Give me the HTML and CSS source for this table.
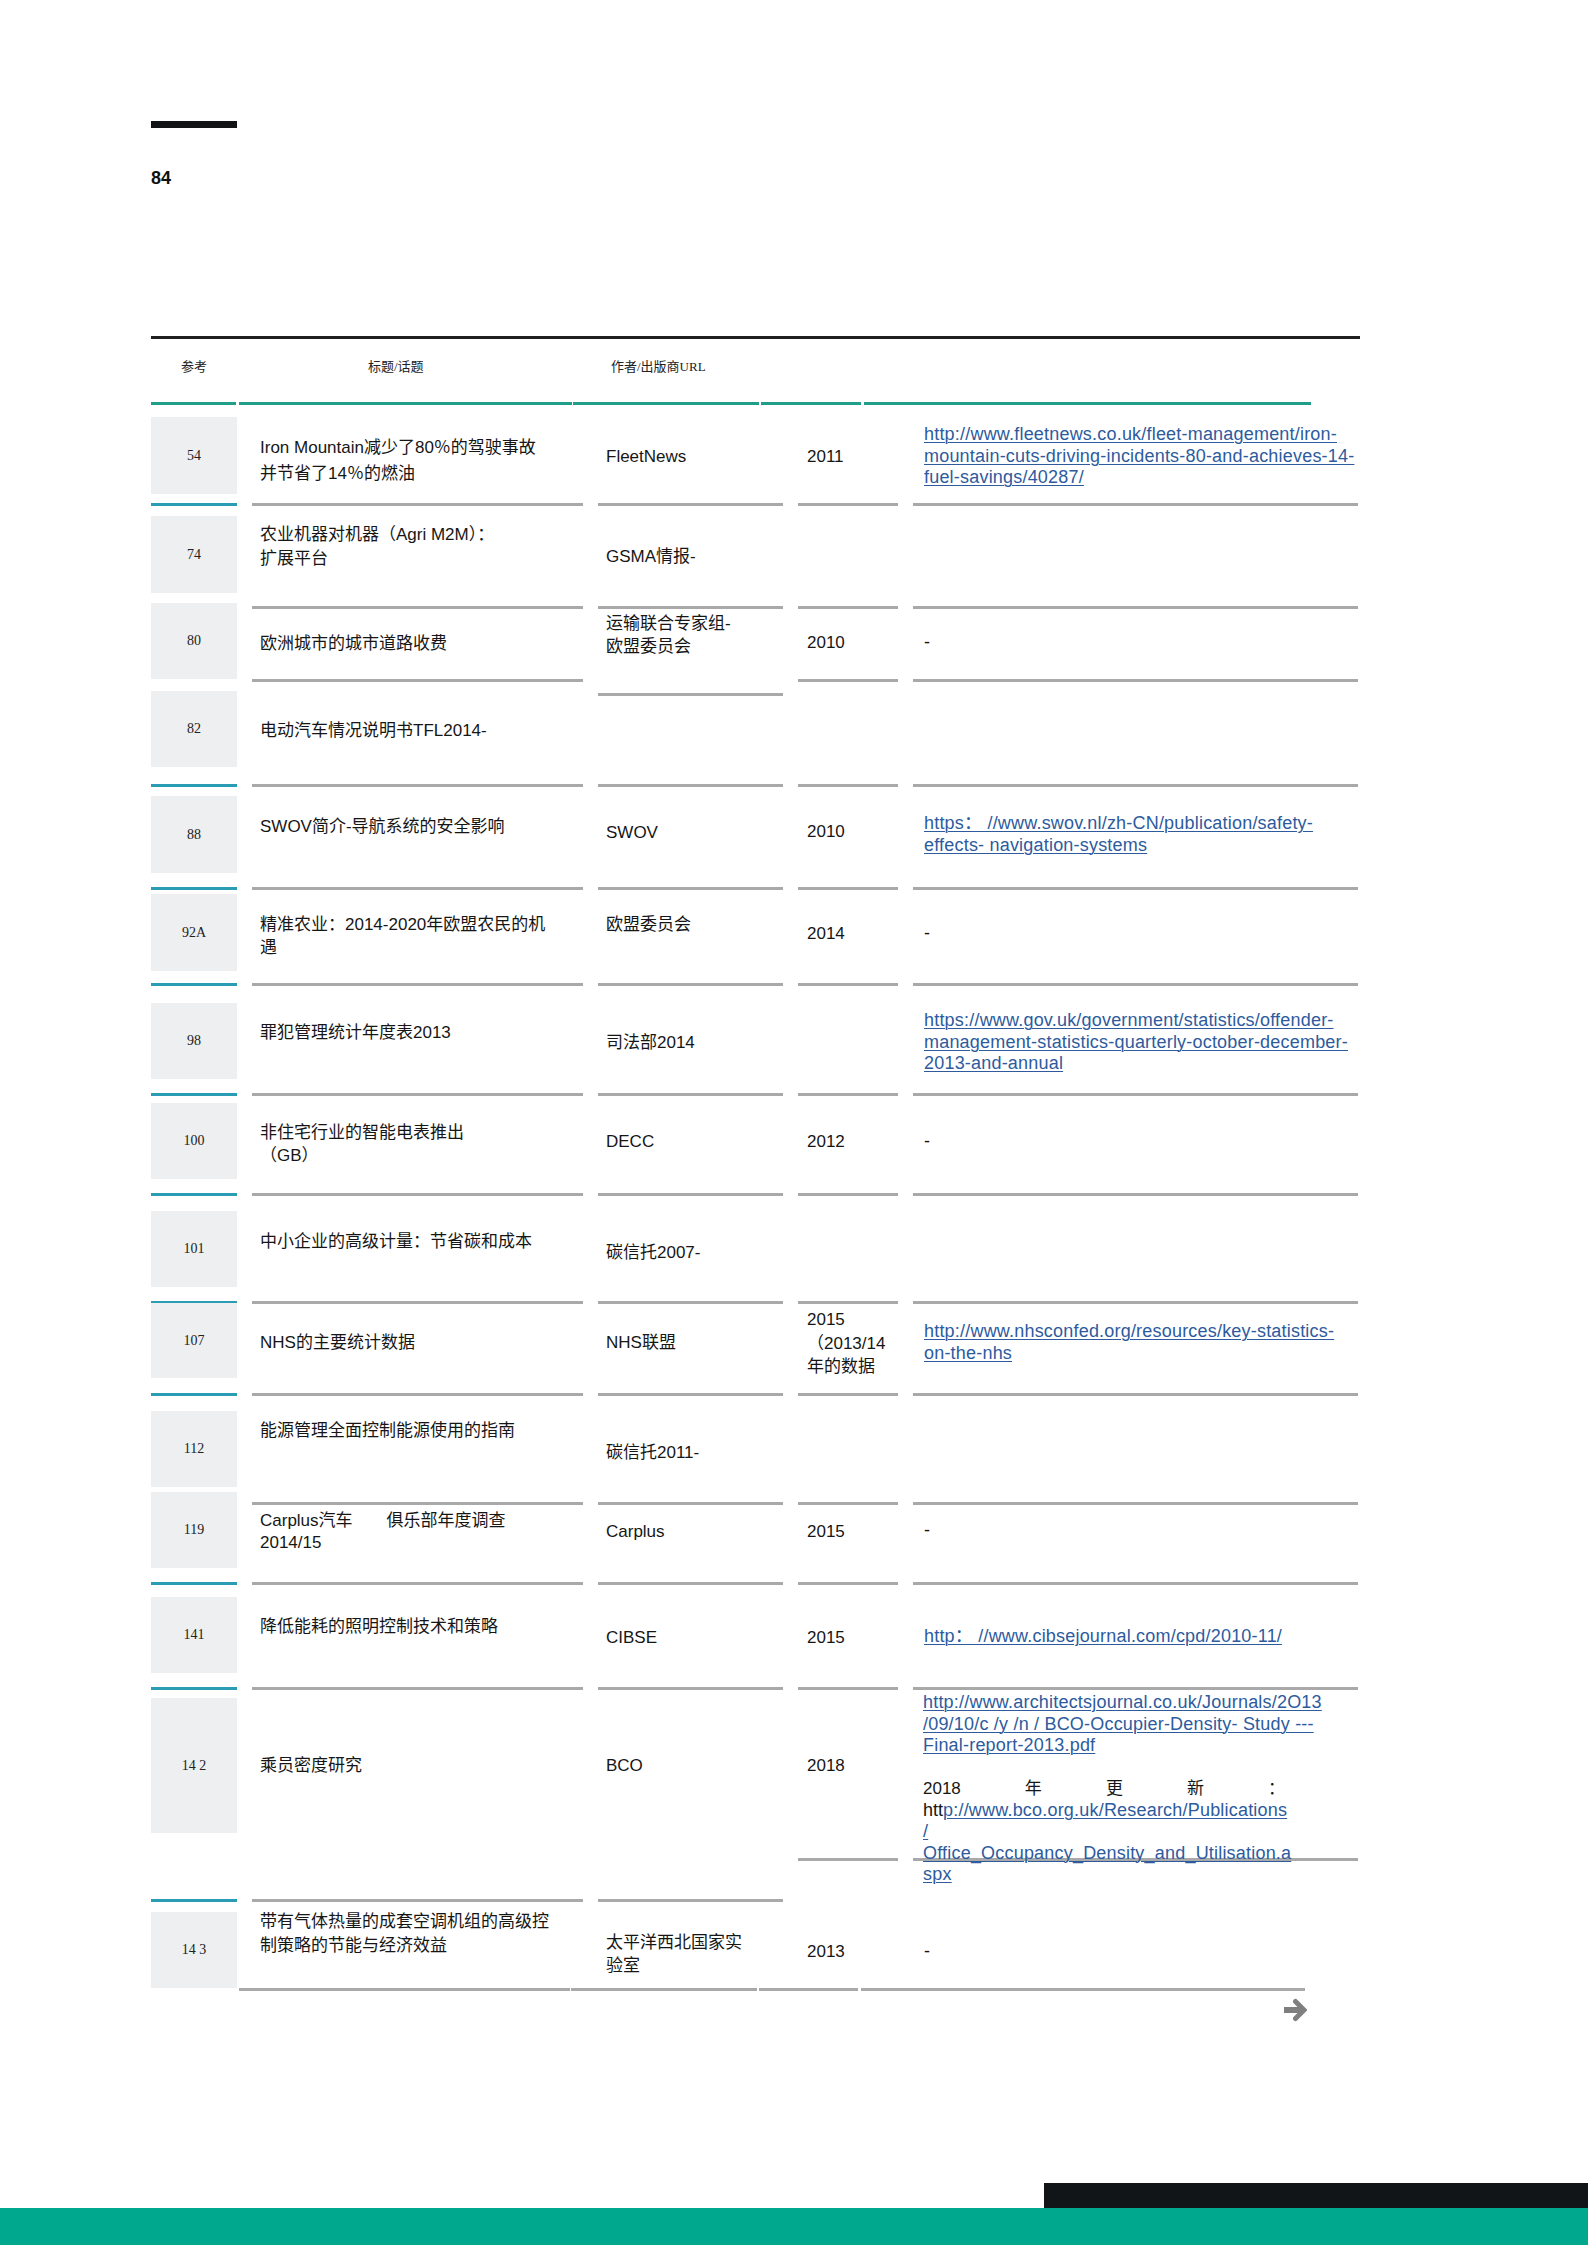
FILE: index.html
```html
<!DOCTYPE html>
<html lang="zh-CN">
<head>
<meta charset="utf-8">
<title>参考文献 84</title>
<link rel="stylesheet" href="styles.css">
</head>
<body>
<div class="page">
  <header class="page-head">
    <div class="tab-bar"></div>
    <div class="page-num">84</div>
  </header>

  <section class="refs">
    <div class="refs-head">
      <div class="h-ref">参考</div>
      <div class="h-title">标题/话题</div>
      <div class="h-author">作者/出版商URL</div>
    </div>
    <div class="head-rule">
      <span class="hr-a"></span><span class="hr-b"></span><span class="hr-c"></span><span class="hr-d"></span><span class="hr-e"></span>
    </div>

    <div class="row r54">
      <div class="c c-ref cyan"><div class="ref-box">54</div></div>
      <div class="c c-title">Iron Mountain减少了80％的驾驶事故<br>并节省了14％的燃油</div>
      <div class="c c-author">FleetNews</div>
      <div class="c c-year">2011</div>
      <div class="c c-url"><a class="link" href="#">http://www.fleetnews.co.uk/fleet-management/iron-<br>mountain-cuts-driving-incidents-80-and-achieves-14-<br>fuel-savings/40287/</a></div>
    </div>

    <div class="row r74">
      <div class="c c-ref"><div class="ref-box">74</div></div>
      <div class="c c-title">农业机器对机器（Agri M2M）：<br>扩展平台</div>
      <div class="c c-author">GSMA情报-</div>
      <div class="c c-year"></div>
      <div class="c c-url"></div>
    </div>

    <div class="row r80">
      <div class="c c-ref"><div class="ref-box">80</div></div>
      <div class="c c-title">欧洲城市的城市道路收费</div>
      <div class="c c-author">运输联合专家组-<br>欧盟委员会</div>
      <div class="c c-year">2010</div>
      <div class="c c-url">-</div>
    </div>

    <div class="row r82">
      <div class="c c-ref cyan"><div class="ref-box">82</div></div>
      <div class="c c-title">电动汽车情况说明书TFL2014-</div>
      <div class="c c-author"></div>
      <div class="c c-year"></div>
      <div class="c c-url"></div>
    </div>

    <div class="row r88">
      <div class="c c-ref cyan"><div class="ref-box">88</div></div>
      <div class="c c-title">SWOV简介-导航系统的安全影响</div>
      <div class="c c-author">SWOV</div>
      <div class="c c-year">2010</div>
      <div class="c c-url"><a class="link" href="#">https：&nbsp;//www.swov.nl/zh-CN/publication/safety-<br>effects- navigation-systems</a></div>
    </div>

    <div class="row r92">
      <div class="c c-ref cyan"><div class="ref-box">92A</div></div>
      <div class="c c-title">精准农业：2014-2020年欧盟农民的机<br>遇</div>
      <div class="c c-author">欧盟委员会</div>
      <div class="c c-year">2014</div>
      <div class="c c-url">-</div>
    </div>

    <div class="row r98">
      <div class="c c-ref cyan"><div class="ref-box">98</div></div>
      <div class="c c-title">罪犯管理统计年度表2013</div>
      <div class="c c-author">司法部2014</div>
      <div class="c c-year"></div>
      <div class="c c-url"><a class="link" href="#">https://www.gov.uk/government/statistics/offender-<br>management-statistics-quarterly-october-december-<br>2013-and-annual</a></div>
    </div>

    <div class="row r100">
      <div class="c c-ref cyan"><div class="ref-box">100</div></div>
      <div class="c c-title">非住宅行业的智能电表推出<br>（GB）</div>
      <div class="c c-author">DECC</div>
      <div class="c c-year">2012</div>
      <div class="c c-url">-</div>
    </div>

    <div class="row r101">
      <div class="c c-ref cyan"><div class="ref-box">101</div></div>
      <div class="c c-title">中小企业的高级计量：节省碳和成本</div>
      <div class="c c-author">碳信托2007-</div>
      <div class="c c-year"></div>
      <div class="c c-url"></div>
    </div>

    <div class="row r107">
      <div class="c c-ref cyan"><div class="ref-box">107</div></div>
      <div class="c c-title">NHS的主要统计数据</div>
      <div class="c c-author">NHS联盟</div>
      <div class="c c-year">2015<br>（2013/14<br>年的数据</div>
      <div class="c c-url"><a class="link" href="#">http://www.nhsconfed.org/resources/key-statistics-<br>on-the-nhs</a></div>
    </div>

    <div class="row r112">
      <div class="c c-ref"><div class="ref-box">112</div></div>
      <div class="c c-title">能源管理全面控制能源使用的指南</div>
      <div class="c c-author">碳信托2011-</div>
      <div class="c c-year"></div>
      <div class="c c-url"></div>
    </div>

    <div class="row r119">
      <div class="c c-ref cyan"><div class="ref-box">119</div></div>
      <div class="c c-title">Carplus汽车　　俱乐部年度调查<br>2014/15</div>
      <div class="c c-author">Carplus</div>
      <div class="c c-year">2015</div>
      <div class="c c-url">-</div>
    </div>

    <div class="row r141">
      <div class="c c-ref cyan"><div class="ref-box">141</div></div>
      <div class="c c-title">降低能耗的照明控制技术和策略</div>
      <div class="c c-author">CIBSE</div>
      <div class="c c-year">2015</div>
      <div class="c c-url"><a class="link" href="#">http：&nbsp;//www.cibsejournal.com/cpd/2010-11/</a></div>
    </div>

    <div class="row r142">
      <div class="c c-ref cyan"><div class="ref-box">14 2</div></div>
      <div class="c c-title">乘员密度研究</div>
      <div class="c c-author">BCO</div>
      <div class="c c-year">2018</div>
      <div class="c c-url">
        <a class="link" href="#">http://www.architectsjournal.co.uk/Journals/2O13<br>/09/10/c /y /n / BCO-Occupier-Density- Study ---<br>Final-report-2013.pdf</a>
        <div class="update"><span>2018</span><span>年</span><span>更</span><span>新</span><span>：</span></div>
        <div>htt<a class="link" href="#">p://www.bco.org.uk/Research/Publications<br>/<br>Office_Occupancy_Density_and_Utilisation.a<br>spx</a></div>
      </div>
    </div>

    <div class="row r143">
      <div class="c c-ref"><div class="ref-box">14 3</div></div>
      <div class="c c-title">带有气体热量的成套空调机组的高级控<br>制策略的节能与经济效益</div>
      <div class="c c-author">太平洋西北国家实<br>验室</div>
      <div class="c c-year">2013</div>
      <div class="c c-url">-</div>
    </div>

    <div class="end-rule">
      <span class="er-a"></span><span class="er-b"></span><span class="er-c"></span><span class="er-d"></span>
    </div>

    <div class="next">
      <svg width="24" height="24" viewBox="0 0 24 24" aria-hidden="true">
        <path d="M1 12 H18" stroke="#7f7f7f" stroke-width="6" fill="none"/>
        <path d="M12.5 3.5 L21 12 L12.5 20.5" stroke="#7f7f7f" stroke-width="5" fill="none" stroke-linecap="round" stroke-linejoin="miter"/>
      </svg>
    </div>
  </section>

  <footer class="foot">
    <div class="foot-black"></div>
    <div class="foot-teal"></div>
  </footer>
</div>
</body>
</html>
```

FILE: styles.css
```css
* { box-sizing: border-box; }

html, body {
  margin: 0;
  padding: 0;
  background: #ffffff;
}

body {
  font-family: "Liberation Sans", "Noto Sans CJK SC", sans-serif;
  color: #161616;
}

.page {
  width: 1588px;
  min-height: 2245px;
  display: flex;
  flex-direction: column;
}

/* ---------- page head ---------- */
.page-head {
  padding: 121px 0 0 151px;
}

.tab-bar {
  width: 86px;
  height: 7px;
  background: #111315;
}

.page-num {
  margin-top: 40px;
  font-size: 18px;
  font-weight: 700;
  line-height: 21px;
  color: #111;
}

/* ---------- table ---------- */
.refs {
  margin: 147px 0 0 151px;
  width: 1209px;
  border-top: 3px solid #202020;
}

.refs-head {
  height: 63px;
  display: flex;
  padding-top: 20px;
  font-family: "Liberation Serif", "Noto Sans CJK SC", serif;
  font-size: 13px;
  line-height: 16px;
  color: #222;
}

.h-ref { width: 86px; text-align: center; }
.h-title { margin-left: 131px; width: 243px; }

.head-rule,
.end-rule {
  display: flex;
  height: 3px;
}

.head-rule span { height: 3px; background: #1f9e89; display: block; }
.hr-a { width: 85px; }
.hr-b { width: 333px; margin-left: 3px; }
.hr-c { width: 186px; margin-left: 1px; }
.hr-d { width: 100px; margin-left: 2px; }
.hr-e { width: 447px; margin-left: 3px; }

.end-rule span { height: 3px; background: #a9a9a9; display: block; }
.er-a { width: 331px; margin-left: 88px; }
.er-b { width: 186px; margin-left: 1px; }
.er-c { width: 99px; margin-left: 2px; }
.er-d { width: 444px; margin-left: 3px; }

.row {
  display: grid;
  grid-template-columns: 86px 331px 185px 100px 445px;
  grid-template-rows: 100%;
  column-gap: 15px;
}

.c {
  height: 100%;
  border-bottom: 3px solid #a9a9a9;
  font-size: 17px;
  line-height: 24px;
  white-space: nowrap;
}

.c-ref { border-bottom-color: transparent; }
.c-ref.cyan { border-bottom-color: #2a9db4; }

.ref-box {
  height: 76px;
  background: #eeeff1;
  display: flex;
  align-items: center;
  justify-content: center;
  font-family: "Liberation Serif", serif;
  font-size: 14px;
  color: #222;
  white-space: pre;
}

.c-title { padding-left: 8px; }
.c-author { padding-left: 8px; }
.c-year { padding-left: 9px; }
.c-url {
  padding-left: 11px;
  font-size: 18px;
  line-height: 21.5px;
}

.link {
  color: #2d5b9e;
  letter-spacing: 0.2px;
  text-decoration: underline;
  text-decoration-thickness: 1px;
  text-underline-offset: 2px;
}

.update {
  display: flex;
  justify-content: space-between;
  width: 362px;
  margin-top: 21.5px;
  font-size: 17px;
  color: #161616;
}

/* ---------- per-row geometry ---------- */
.r54 { height: 101px; }
.r54 .ref-box { margin-top: 12px; height: 77px; }
.r54 .c-title { padding-top: 30px; line-height: 26px; }
.r54 .c-author, .r54 .c-year { padding-top: 40px; }
.r54 .c-url { padding-top: 19px; }

.r74 { height: 103px; }
.r74 .ref-box { margin-top: 10px; height: 77px; }
.r74 .c-title { padding-top: 17px; }
.r74 .c-author { padding-top: 39px; }

.r80 { height: 73px; }
.r80 .ref-box { margin-top: -6px; }
.r80 .c-title { padding-top: 23px; }
.r80 .c-author { padding-top: 3px; height: 87px; align-self: start; line-height: 23px; }
.r80 .c-year { padding-top: 22px; }
.r80 .c-url { padding-top: 23px; }

.r82 { height: 105px; }
.r82 .ref-box { margin-top: 9px; }
.r82 .c-title { padding-top: 37px; }

.r88 { height: 103px; }
.r88 .ref-box { margin-top: 9px; height: 77px; }
.r88 .c-title { padding-top: 28px; }
.r88 .c-author { padding-top: 34px; }
.r88 .c-year { padding-top: 33px; }
.r88 .c-url { padding-top: 26px; }

.r92 { height: 96px; }
.r92 .ref-box { margin-top: 4px; height: 77px; }
.r92 .c-title { padding-top: 23px; line-height: 23px; }
.r92 .c-author { padding-top: 23px; }
.r92 .c-year { padding-top: 32px; }
.r92 .c-url { padding-top: 33px; }

.r98 { height: 110px; }
.r98 .ref-box { margin-top: 17px; }
.r98 .c-title { padding-top: 35px; }
.r98 .c-author { padding-top: 45px; }
.r98 .c-url { padding-top: 24px; }

.r100 { height: 100px; }
.r100 .ref-box { margin-top: 7px; }
.r100 .c-title { padding-top: 25px; line-height: 23px; }
.r100 .c-author, .r100 .c-year { padding-top: 34px; }
.r100 .c-url { padding-top: 35px; }

.r101 { height: 108px; }
.r101 .ref-box { margin-top: 15px; }
.r101 .c-title { padding-top: 34px; }
.r101 .c-author { padding-top: 45px; }

.r107 { height: 92px; }
.r107 .ref-box { margin-top: -1px; height: 75px; }
.r107 .c-title, .r107 .c-author { padding-top: 27px; }
.r107 .c-year { padding-top: 4px; line-height: 23.5px; }
.r107 .c-url { padding-top: 17px; }

.r112 { height: 109px; }
.r112 .ref-box { margin-top: 15px; }
.r112 .c-title { padding-top: 23px; }
.r112 .c-author { padding-top: 45px; }

.r119 { height: 80px; }
.r119 .ref-box { margin-top: -13px; }
.r119 .c-title { padding-top: 5px; line-height: 22px; }
.r119 .c-author, .r119 .c-year { padding-top: 15px; }
.r119 .c-url { padding-top: 15px; }

.r141 { height: 105px; }
.r141 .ref-box { margin-top: 12px; }
.r141 .c-title { padding-top: 30px; }
.r141 .c-author, .r141 .c-year { padding-top: 41px; }
.r141 .c-url { padding-top: 41px; }

.r142 { height: 212px; }
.r142 .ref-box { margin-top: 8px; height: 135px; }
.r142 .c-title, .r142 .c-author { padding-top: 64px; }
.r142 .c-year { padding-top: 64px; height: 171px; align-self: start; }
.r142 .c-url { padding-top: 2px; padding-left: 10px; height: 171px; align-self: start; }

.r143 { height: 86px; }
.r143 .c { border-bottom: 0; }
.r143 .ref-box { margin-top: 10px; }
.r143 .c-title { padding-top: 8px; }
.r143 .c-author { padding-top: 29px; line-height: 23px; }
.r143 .c-year { padding-top: 38px; }
.r143 .c-url { padding-top: 39px; }

/* ---------- next arrow ---------- */
.next {
  display: flex;
  justify-content: flex-end;
  padding-right: 53px;
  margin-top: 7px;
  height: 24px;
}

.next svg { display: block; }

/* ---------- footer ---------- */
.foot {
  margin-top: auto;
}

.foot-black {
  margin-left: 1044px;
  height: 25px;
  background: #111518;
}

.foot-teal {
  height: 37px;
  background: #00a98e;
}
```
